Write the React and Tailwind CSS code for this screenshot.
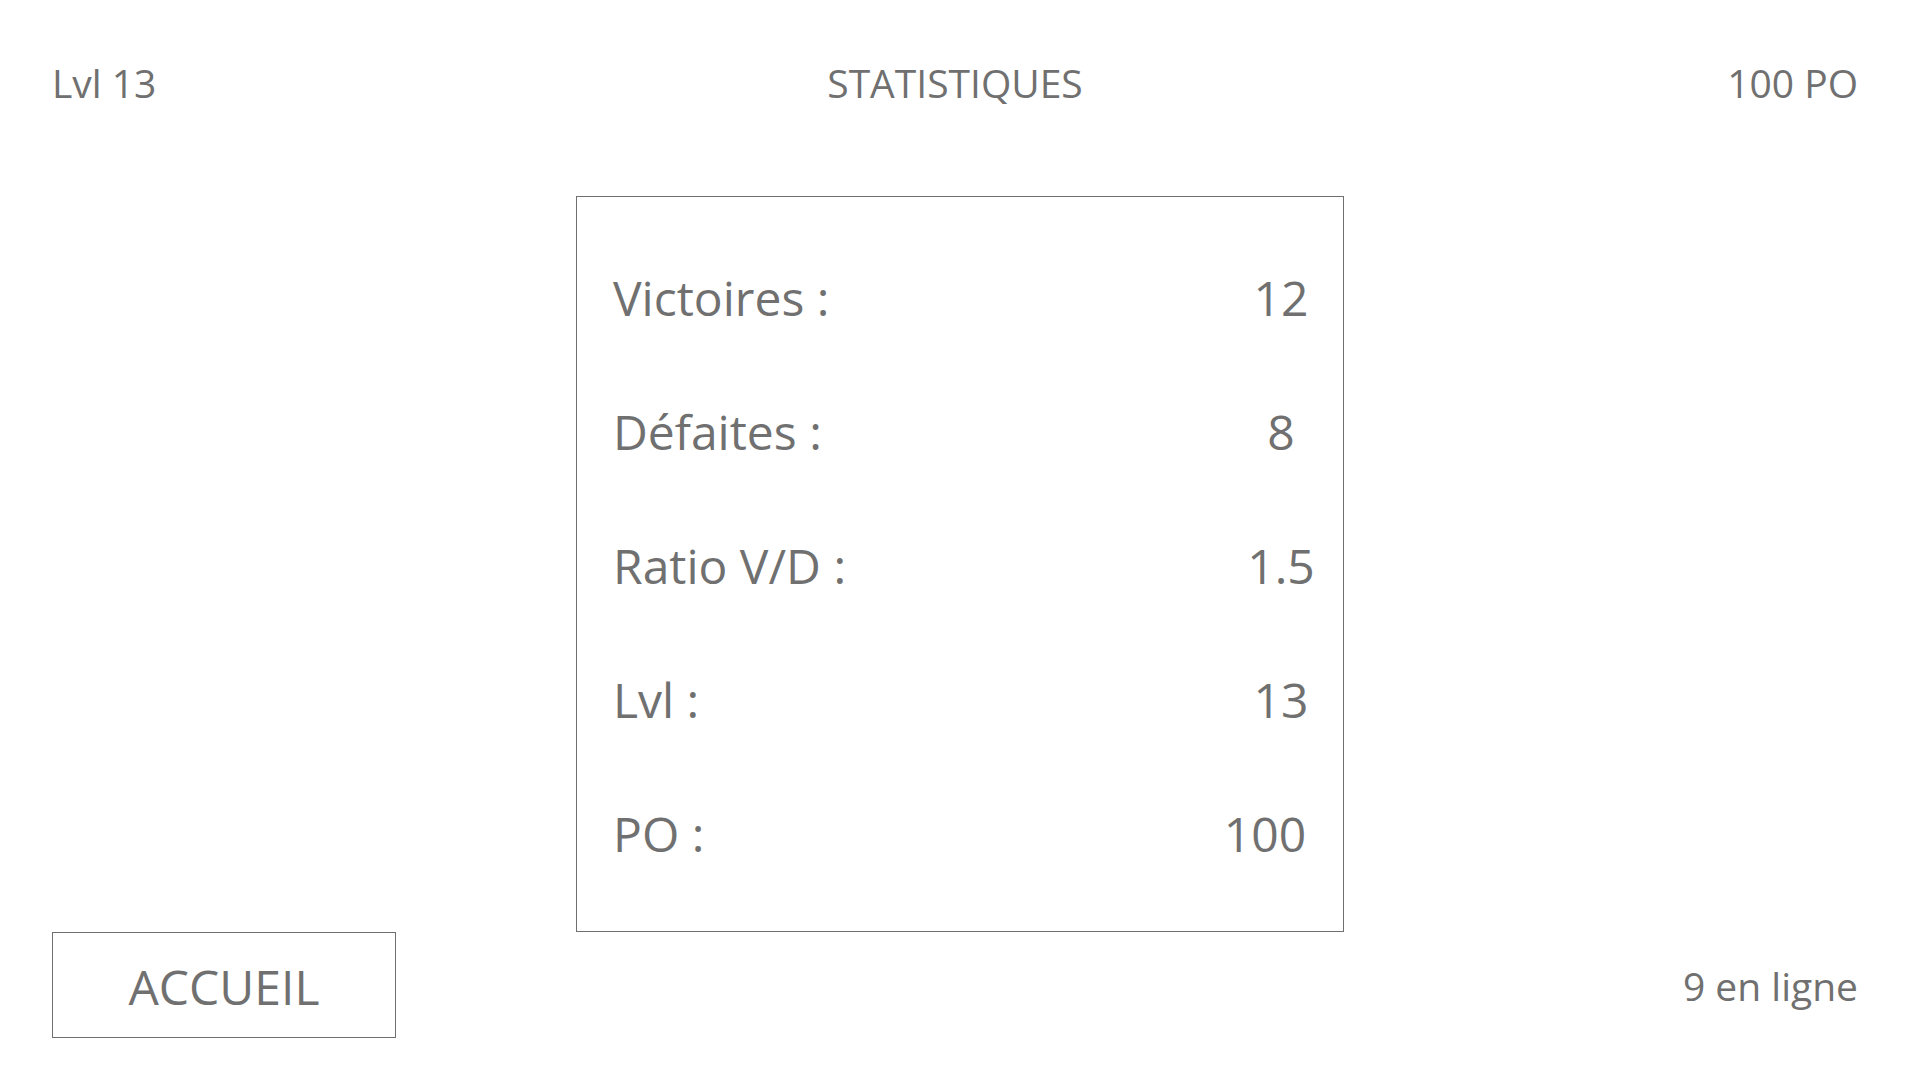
export default function App() {
  const rows = [
    { label: "Victoires :", value: "12", cls: "" },
    { label: "Défaites :", value: "8", cls: "" },
    { label: "Ratio V/D :", value: "1.5", cls: "" },
    { label: "Lvl :", value: "13", cls: "" },
    { label: "PO :", value: "100", cls: "mr-[16px]" },
  ];
  return (
    <div
      className="w-[1920px] h-[1080px] bg-white text-[#707070] flex flex-col overflow-hidden"
      style={{ fontFamily: '"Open Sans", "Noto Sans", sans-serif' }}
    >
      <div className="flex justify-between items-start pt-[59px] pl-[52px] pr-[62px] text-[39px] leading-[48px]">
        <span className="w-[300px]">Lvl 13</span>
        <span>STATISTIQUES</span>
        <span className="w-[300px] text-right">100 PO</span>
      </div>
      <div className="mx-auto mt-[89px] w-[768px] h-[736px] border border-[#707070] pt-[34px] pl-[36px] pr-[2px] flex flex-col">
        {rows.map((r) => (
          <div key={r.label} className="flex justify-between items-center h-[134px] text-[48px] leading-[134px]">
            <span>{r.label}</span>
            <span className={"w-[120px] text-center " + r.cls}>{r.value}</span>
          </div>
        ))}
      </div>
      <div className="flex justify-between items-center pl-[52px] pr-[62px]">
        <button className="w-[344px] h-[106px] border border-[#707070] text-[48px] leading-[60px] pt-[4px] text-[#707070] flex items-center justify-center">
          ACCUEIL
        </button>
        <span className="text-[39px] leading-[48px] pt-[2px]">9 en ligne</span>
      </div>
    </div>
  );
}
